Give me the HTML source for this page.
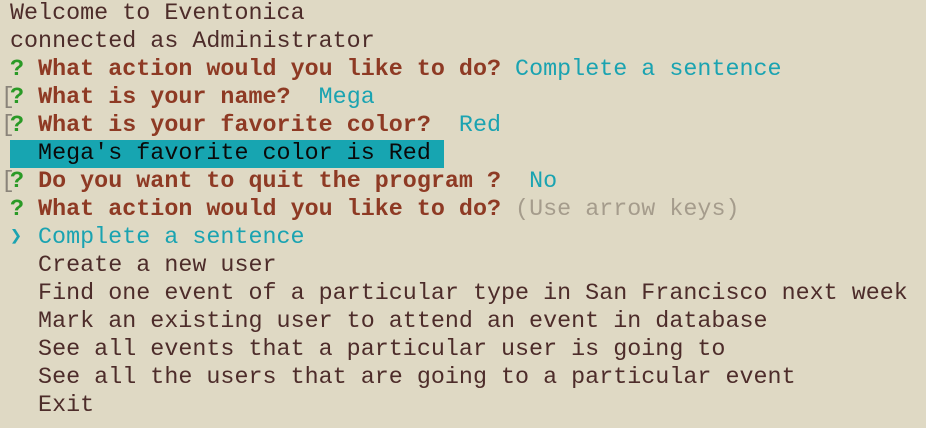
<!DOCTYPE html>
<html><head><meta charset="utf-8"><style>
html,body{margin:0;padding:0;background:#dfd9c4;width:926px;height:428px;overflow:hidden}
.t{position:absolute;left:10px;top:0px;font-family:"Liberation Mono","Courier New",monospace;font-size:23.35px;letter-spacing:0.02px;line-height:28px;color:#4d2c2a}
.l{height:28px;position:relative;white-space:pre}
.q{color:#2a9a26;font-weight:bold}
.b{color:#8e3a24;font-weight:bold}
.c{color:#1aa3b1}
.g{color:#a59c8c}
.br{position:absolute;left:-9px;top:0;color:#8a847a;font-weight:normal}
.hl{background:#17a5b1;color:#0a0a0a;display:inline-block;width:434px}
.ar{display:inline-block;width:14px;overflow:hidden;color:#1aa3b1;font-weight:bold;font-size:20px;vertical-align:top}
</style></head><body>
<div class="t"><div class="l">Welcome to Eventonica</div><div class="l">connected as Administrator</div><div class="l"><span class="q">?</span> <span class="b">What action would you like to do?</span> <span class="c">Complete a sentence</span></div><div class="l"><span class="br">[</span><span class="q">?</span> <span class="b">What is your name? </span> <span class="c">Mega</span></div><div class="l"><span class="br">[</span><span class="q">?</span> <span class="b">What is your favorite color? </span> <span class="c">Red</span></div><div class="l"><span class="hl">  Mega's favorite color is Red</span></div><div class="l"><span class="br">[</span><span class="q">?</span> <span class="b">Do you want to quit the program ? </span> <span class="c">No</span></div><div class="l"><span class="q">?</span> <span class="b">What action would you like to do?</span> <span class="g">(Use arrow keys)</span></div><div class="l"><span class="ar">❯</span> <span class="c">Complete a sentence</span></div><div class="l">  Create a new user</div><div class="l">  Find one event of a particular type in San Francisco next week</div><div class="l">  Mark an existing user to attend an event in database</div><div class="l">  See all events that a particular user is going to</div><div class="l">  See all the users that are going to a particular event</div><div class="l">  Exit</div></div>
</body></html>
